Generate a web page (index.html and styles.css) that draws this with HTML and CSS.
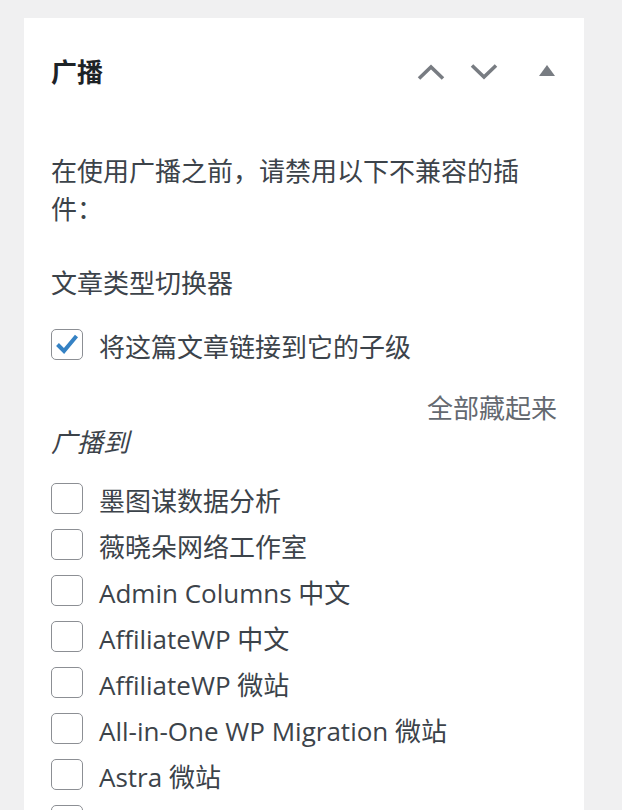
FILE: index.html
```html
<!DOCTYPE html>
<html lang="zh-CN">
<head>
  <meta charset="UTF-8">
  <meta name="viewport" content="width=device-width, initial-scale=1.0">
  <title>广播</title>
  <link rel="stylesheet" href="styles.css">
</head>
<body>

  <div class="postbox">
    <div class="postbox-header">
      <h2>广播</h2>
      <div class="handle-actions">
        <button class="handle up" aria-label="上移">
          <svg width="28" height="16" viewBox="0 0 28 16"><polyline points="2,14.5 14,3 26,14.5" fill="none" stroke="#787c82" stroke-width="3.6"/></svg>
        </button>
        <button class="handle down" aria-label="下移">
          <svg width="28" height="16" viewBox="0 0 28 16"><polyline points="2,1.5 14,13 26,1.5" fill="none" stroke="#787c82" stroke-width="3.6"/></svg>
        </button>
        <button class="handle toggle" aria-label="折叠">
          <svg width="16" height="11" viewBox="0 0 16 11"><polygon points="8,0 16,11 0,11" fill="#787c82"/></svg>
        </button>
      </div>
    </div>

    <div class="inside">
      <p class="notice">在使用广播之前，请禁用以下不兼容的插件：</p>
      <p class="plugin">文章类型切换器</p>

      <label class="row linked">
        <span class="box checked">
          <svg width="24" height="22" viewBox="0 0 24 22"><polyline points="2.5,11.5 9,18 21.5,3" fill="none" stroke="#3582c4" stroke-width="4"/></svg>
        </span>
        将这篇文章链接到它的子级
      </label>

      <div class="hide-all">全部藏起来</div>
      <p class="to">广播到</p>

      <ul class="sites">
        <li class="row"><span class="box"></span>墨图谋数据分析</li>
        <li class="row"><span class="box"></span>薇晓朵网络工作室</li>
        <li class="row"><span class="box"></span>Admin Columns 中文</li>
        <li class="row"><span class="box"></span>AffiliateWP 中文</li>
        <li class="row"><span class="box"></span>AffiliateWP 微站</li>
        <li class="row"><span class="box"></span>All-in-One WP Migration 微站</li>
        <li class="row"><span class="box"></span>Astra 微站</li>
        <li class="row last"><span class="box"></span></li>
      </ul>
    </div>
  </div>

</body>
</html>
```

FILE: styles.css
```css
* {
  margin: 0;
  padding: 0;
  box-sizing: border-box;
}

body {
  background: #f0f0f1;
  padding: 18px 38px 0 24px;
  font-family: "Open Sans", "Noto Sans CJK SC", sans-serif;
  font-size: 26px;
  color: #3c434a;
  overflow: hidden;
  height: 810px;
}

.postbox {
  background: #fff;
  padding: 0 27px 0 27px;
  min-height: 900px;
}

.postbox-header {
  display: flex;
  align-items: center;
  justify-content: space-between;
  height: 108px;
}

.postbox-header h2 {
  font-size: 26px;
  font-weight: 700;
  color: #1d2327;
  line-height: 1;
}

.handle-actions {
  display: flex;
  align-items: center;
  margin-right: 2px;
}

.handle {
  background: none;
  border: none;
  display: flex;
  align-items: center;
  justify-content: center;
  height: 30px;
}

.handle.up {
  margin-right: 25px;
}

.handle.down {
  margin-right: 41px;
}

.handle.toggle {
  margin-top: -4px;
}

.inside p,
.hide-all,
.row {
  line-height: 38px;
}

.notice {
  margin-top: 26px;
  padding-right: 10px;
}

.plugin {
  margin-top: 36px;
}

.row {
  display: flex;
  align-items: center;
  gap: 16px;
  height: 46px;
  list-style: none;
}

.linked {
  margin-top: 22px;
}

.box {
  flex: none;
  width: 32px;
  height: 31px;
  border: 1.5px solid #8c8f94;
  border-radius: 5px;
  display: flex;
  align-items: center;
  justify-content: center;
  margin-top: -6px;
}

.box.checked {
  margin-top: -6px;
}

.hide-all {
  text-align: right;
  color: #646970;
  margin-top: 19px;
}

.to {
  font-style: italic;
  margin-top: -4px;
}

.sites {
  margin-top: 17px;
}
```
